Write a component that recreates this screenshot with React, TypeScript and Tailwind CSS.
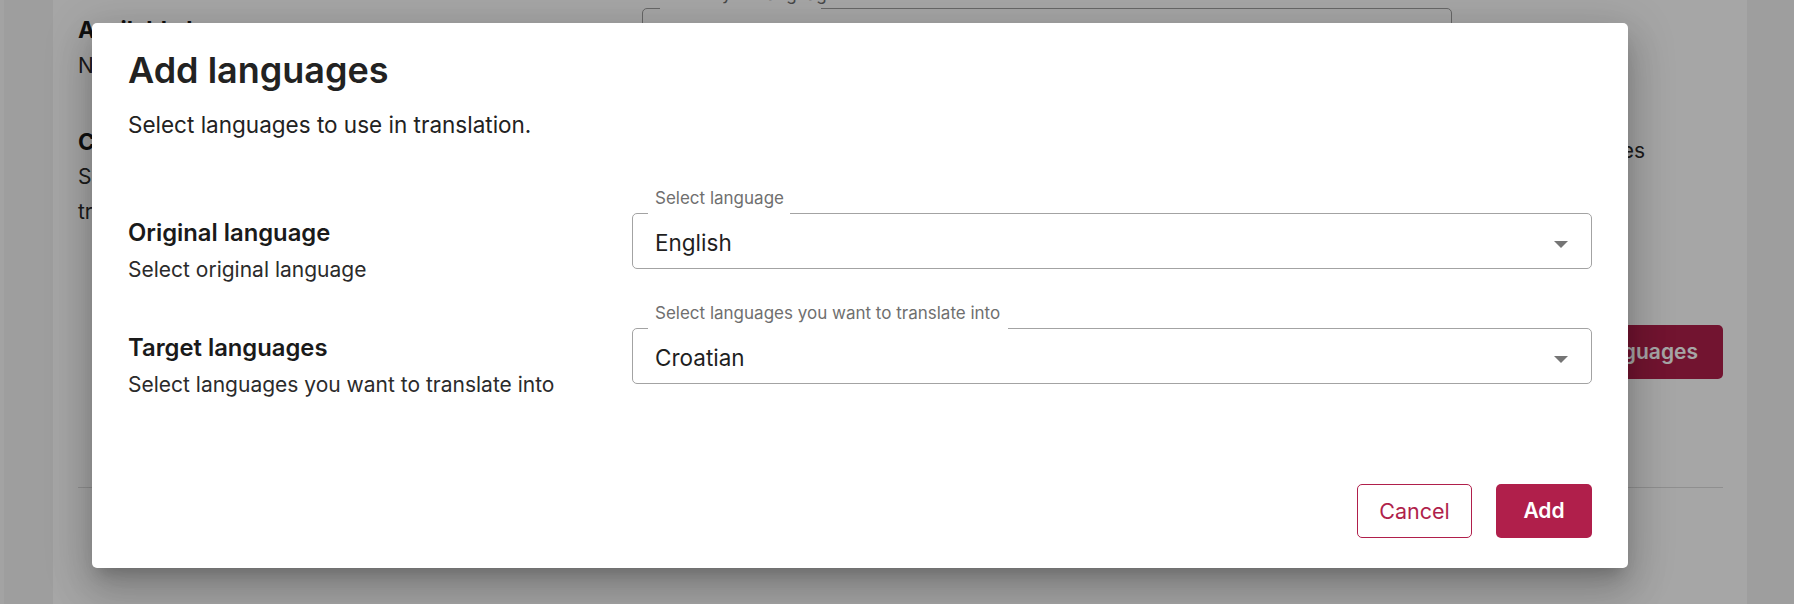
import React from "react";

function Caret() {
  return (
    <svg width="14" height="7" viewBox="0 0 14 7" className="block">
      <polygon points="0,0 14,0 7,7" fill="#757575" />
    </svg>
  );
}

function SelectField({ label, value, gap }: { label: string; value: string; gap: string }) {
  return (
    <div className="flex flex-col">
      <div className="pl-[23px] text-[17px] leading-[24px] text-[#6f6f6f] whitespace-nowrap">{label}</div>
      <div className="relative mt-[3px] flex h-[56px] items-center justify-between rounded-[5px] border border-[#a3a3a3] pl-[22px] pr-[23px]">
        <span className={`absolute top-[-2px] left-[15px] h-[3px] bg-white ${gap}`} />
        <span className="text-[22.5px] text-[#1f1f1f] pt-[3px]">{value}</span>
        <span className="pt-[6px]">
          <Caret />
        </span>
      </div>
    </div>
  );
}

function Row({ title, desc, label, value, gap }: { title: string; desc: string; label: string; value: string; gap: string }) {
  return (
    <div className="flex items-start">
      <div className="w-[504px] shrink-0 pt-[32px]">
        <div className="text-[23.8px] font-semibold leading-[30px] text-[#1a1a1a]">{title}</div>
        <div className="mt-[7px] text-[21px] leading-[30px] text-[#2b2b2b]">{desc}</div>
      </div>
      <div className="flex-1">
        <SelectField label={label} value={value} gap={gap} />
      </div>
    </div>
  );
}

export default function App() {
  return (
    <div className="relative h-[604px] w-[1794px] overflow-hidden bg-[#f3f3f3] font-['Inter',sans-serif]">
      {/* background page */}
      <div className="flex h-full">
        <div className="w-[4px] shrink-0 bg-[#fbfbfb]" />
        <div className="ml-[49px] flex w-[1694px] flex-col bg-white pl-[25px] pr-[24px]">
          <div className="flex">
            <div className="w-[564px] shrink-0 pt-[15px]">
              <div className="text-[23px] font-bold leading-[30px] text-[#1a1a1a]">Available languages</div>
              <div className="mt-[6px] text-[21px] leading-[30px] text-[#2b2b2b]">No languages selected yet</div>
            </div>
            <div className="relative mt-[8px] h-[90px] w-[810px] rounded-[5px] border border-[#9e9e9e]">
              <span className="absolute top-[-2px] left-[17px] h-[3px] w-[161px] bg-white" />
              <span className="absolute top-[-27px] left-[24px] whitespace-nowrap text-[17px] leading-[24px] text-[#6f6f6f]">Select your languages</span>
            </div>
          </div>
          <div className="mt-[29px] flex">
            <div className="w-[564px] shrink-0">
              <div className="text-[23px] font-bold leading-[30px] text-[#1a1a1a]">Choose languages</div>
              <div className="mt-[2px] text-[21px] leading-[35px] text-[#2b2b2b]">
                Select the languages you want to use when
                <br />
                translating your content
              </div>
            </div>
            <div className="w-[1003px] pt-[9px]">
              <div className="whitespace-nowrap text-right text-[21px] leading-[30px] text-[#2b2b2b]">
                Languages can be added or removed at any time from available languages
              </div>
            </div>
          </div>
          <div className="mt-[96px] flex justify-end">
            <div className="flex h-[54px] items-center rounded-[5px] bg-[#b01f4b] px-[25px] text-[21px] font-semibold text-white">
              Add languages
            </div>
          </div>
          <div className="mt-[108px] h-px bg-[#dcdcdc]" />
        </div>
      </div>

      {/* overlay */}
      <div className="absolute inset-0 bg-black/35" />

      {/* dialog */}
      <div className="absolute left-[92px] top-[23px] w-[1536px] rounded-[5px] bg-white px-[36px] pt-[25px] pb-[30px] shadow-[0px_11px_15px_-7px_rgba(0,0,0,0.2),0px_24px_38px_3px_rgba(0,0,0,0.14),0px_9px_46px_8px_rgba(0,0,0,0.12)]">
        <div className="text-[36px] font-semibold leading-[44px] text-[#222222]">Add languages</div>
        <div className="mt-[17px] text-[22.5px] leading-[32px] text-[#222222]">Select languages to use in translation.</div>
        <div className="mt-[45px]">
          <Row
            title="Original language"
            desc="Select original language"
            label="Select language"
            value="English"
            gap="w-[142px]"
          />
        </div>
        <div className="mt-[16px]">
          <Row
            title="Target languages"
            desc="Select languages you want to translate into"
            label="Select languages you want to translate into"
            value="Croatian"
            gap="w-[360px]"
          />
        </div>
        <div className="mt-[84px] flex justify-end gap-[24px]">
          <button className="flex h-[54px] w-[115px] items-center justify-center rounded-[5px] border border-[#b01f4b] bg-white text-[21.5px] text-[#b01f4b]">
            Cancel
          </button>
          <button className="flex h-[54px] w-[96px] items-center justify-center rounded-[5px] bg-[#b01f4b] text-[21px] font-semibold text-white">
            Add
          </button>
        </div>
      </div>
    </div>
  );
}
